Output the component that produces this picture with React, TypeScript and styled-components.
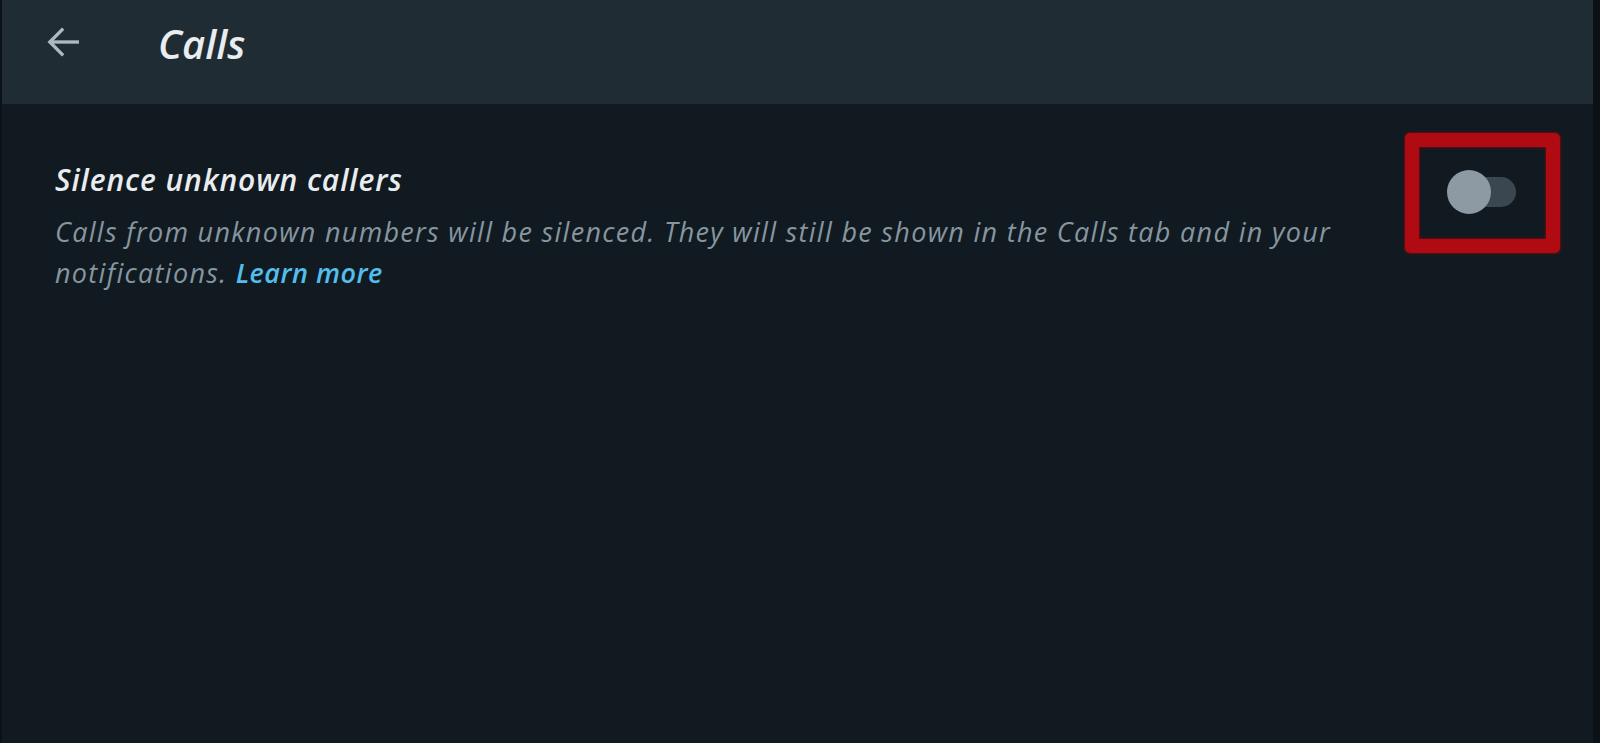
import React, { useState } from 'react'
import styled, { createGlobalStyle } from 'styled-components';

const GlobalStyle = createGlobalStyle`
    html, body {
        margin: 0;
        padding: 0;
        background: #0c1115;
        height: 100%;
    }
    #root {
        height: 100%;
    }
`;

const Page = styled.div`
    height: 743px;
    padding: 0 7px 0 2px;
    background: #0c1115;
    font-family: "Open Sans", Lato, sans-serif;
    font-style: italic;
    overflow: hidden;
`;

const Panel = styled.div`
    height: 100%;
    background: #111a21;
    display: flex;
    flex-direction: column;
`;

const Header = styled.header`
    height: 104px;
    background: #202c33;
    display: flex;
    align-items: flex-start;
    padding: 22px 0 0 42px;
    box-sizing: border-box;
`;

const BackButton = styled.button`
    background: none;
    border: none;
    padding: 0;
    width: 40px;
    height: 40px;
    display: flex;
    align-items: center;
    justify-content: center;
    cursor: pointer;
    color: #aebac1;
`;

const Title = styled.h1`
    margin: 0 0 0 74px;
    font-size: 40px;
    font-weight: 600;
    font-style: italic;
    color: #e9edef;
    line-height: 44px;
`;

const Row = styled.div`
    display: flex;
    justify-content: space-between;
    align-items: flex-start;
    padding: 29px 33px 0 53px;
`;

const TextBlock = styled.div`
    width: 1315px;
    padding-top: 27px;
`;

const SettingName = styled.div`
    font-size: 30px;
    font-weight: 600;
    color: #e9edef;
    line-height: 40px;
    letter-spacing: 0.9px;
`;

const SettingHint = styled.p`
    margin: 11px 0 0;
    font-size: 27px;
    color: #8696a0;
    line-height: 41px;
    letter-spacing: 1.3px;
`;

const Link = styled.a`
    color: #53bdeb;
    font-weight: 600;
    text-decoration: none;
    letter-spacing: 0.5px;
`;

const Highlight = styled.div`
    width: 155px;
    height: 120px;
    box-sizing: border-box;
    border: 14px solid #b00b12;
    border-radius: 5px;
    box-shadow: 0 0 2px 1px rgba(120, 10, 14, 0.8), inset 0 0 2px 1px rgba(120, 10, 14, 0.8);
    display: flex;
    align-items: center;
    padding-left: 40px;
`;

const Track = styled.button<{ $on: boolean }>`
    position: relative;
    width: 57px;
    height: 30px;
    border: none;
    padding: 0;
    border-radius: 15px;
    background: ${p => (p.$on ? '#0b5d4f' : '#3b4750')};
    cursor: pointer;
    margin-top: -2px;
`;

const Knob = styled.span<{ $on: boolean }>`
    position: absolute;
    top: -7px;
    left: ${p => (p.$on ? '25px' : '-12px')};
    width: 44px;
    height: 44px;
    border-radius: 50%;
    background: ${p => (p.$on ? '#00a884' : '#8d9aa3')};
    transition: left 0.15s;
`;

const App: React.FC = () => {
    const [silenced, setSilenced] = useState(false);

    return (
        <>
            <GlobalStyle />
            <Page>
                <Panel>
                    <Header>
                        <BackButton aria-label="Back">
                            <svg width="40" height="40" viewBox="0 0 24 24" fill="none" stroke="currentColor" strokeWidth="2" strokeLinecap="butt">
                                <path d="M21 12H3.5" />
                                <path d="M11.5 4 3.5 12l8 8" />
                            </svg>
                        </BackButton>
                        <Title>Calls</Title>
                    </Header>
                    <Row>
                        <TextBlock>
                            <SettingName>Silence unknown callers</SettingName>
                            <SettingHint>
                                Calls from unknown numbers will be silenced. They will still be shown in the Calls tab and in your notifications. <Link href="#">Learn more</Link>
                            </SettingHint>
                        </TextBlock>
                        <Highlight>
                            <Track $on={silenced} onClick={() => setSilenced(!silenced)} aria-label="Silence unknown callers">
                                <Knob $on={silenced} />
                            </Track>
                        </Highlight>
                    </Row>
                </Panel>
            </Page>
        </>
    )
}

export default App
